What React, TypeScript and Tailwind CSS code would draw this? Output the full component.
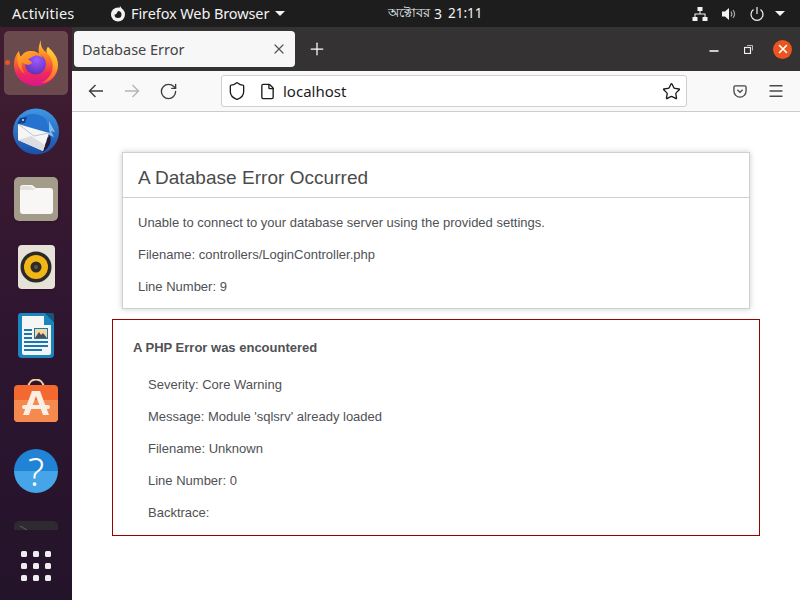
import { Minus, Plus, RotateCw, X, Menu, Star, Shield, File } from 'lucide-react'

function FirefoxIcon() {
  return (
    <svg width="48" height="48" viewBox="0 0 48 48">
      <defs>
        <linearGradient id="ffOuter" x1="0.5" y1="0" x2="0.5" y2="1">
          <stop offset="0" stopColor="#ffcf3a" />
          <stop offset="0.4" stopColor="#ff7a1f" />
          <stop offset="0.72" stopColor="#f0295c" />
          <stop offset="1" stopColor="#d9158f" />
        </linearGradient>
        <linearGradient id="ffFlame" x1="0.5" y1="0" x2="0.5" y2="1">
          <stop offset="0" stopColor="#ffe14a" />
          <stop offset="0.6" stopColor="#ffa52b" />
          <stop offset="1" stopColor="#ff5a2b" />
        </linearGradient>
        <linearGradient id="ffHead" x1="0" y1="0" x2="0.6" y2="1">
          <stop offset="0" stopColor="#ffb02e" />
          <stop offset="1" stopColor="#ff6a1f" />
        </linearGradient>
        <radialGradient id="ffGlobe" cx="0.55" cy="0.3" r="0.8">
          <stop offset="0" stopColor="#9a5cff" />
          <stop offset="1" stopColor="#5a2ab0" />
        </radialGradient>
      </defs>
      <path d="M29 1c-1 6 1 9 6 13-1-3 0-5 1-6 5 5 10 10 10 18 0 12-10 21-22 21C12 47 2 38 2 26c0-6 2-11 5-14 0 3 1 5 2 6 2-4 6-6 10-6 3 0 6 1 8 3-1-4 0-10 2-14z" fill="url(#ffOuter)" />
      <path d="M29 1c-1 6 1 9 6 13 5 5 7 12 5 18-2 6-6 10-11 12 9 0 17-8 17-18 0-8-5-13-10-18-1 1-2 3-1 6-4-3-7-7-6-13z" fill="url(#ffFlame)" />
      <circle cx="23.500" cy="25" r="10.500" fill="url(#ffGlobe)" />
      <path d="M7 12c0 3 1 5 2 6 2-4 6-6 10-6 5 0 10 3 12 7-3-2-6-3-9-2-2 1-3 2-6 3 2 2 3 2 4 4-3 3-7 2-10-1-1 3 0 8 3 12-6-4-10-12-6-23z" fill="url(#ffHead)" />
    </svg>
  )
}

function ThunderbirdIcon() {
  return (
    <svg width="48" height="48" viewBox="0 0 48 48">
      <defs>
        <linearGradient id="tbRing" x1="0.5" y1="0" x2="0.5" y2="1">
          <stop offset="0" stopColor="#3f97e4" />
          <stop offset="1" stopColor="#1a4fa8" />
        </linearGradient>
      </defs>
      <circle cx="24" cy="24.500" r="23" fill="url(#tbRing)" />
      <path d="M36 24c5 7 3 16-5 21l-3-4 5-1-3-3 5-2-2-4 4-1z" fill="#2a1836" />
      <path d="M37 14l6 11-4-1 3 6-5-2z" fill="#7fbdee" />
      <path d="M6 15C12 6 25 4 34 12l4 14-18-5z" fill="#2673cf" />
      <path d="M6 17l31 9-6 18L6 33z" fill="#f5f5f5" />
      <path d="M6 17l16 12 15-3" fill="none" stroke="#c0c4cb" strokeWidth="1" />
      <path d="M6 33l25 11 2-6-14-9z" fill="#dcdde0" />
      <path d="M5 17l3-6 7-1-2 6z" fill="#14428a" />
      <circle cx="11" cy="13" r="1" fill="#bfe0f7" />
    </svg>
  )
}

function FilesIcon() {
  return (
    <div className="w-[44px] h-[44px] rounded-[5px] bg-[#a39c8b] flex items-center justify-center shadow-sm">
      <svg width="33" height="29" viewBox="0 0 33 29">
        <path d="M0 3a3 3 0 0 1 3-3h9l4 3h14a3 3 0 0 1 3 3v20a3 3 0 0 1-3 3H3a3 3 0 0 1-3-3z" fill="#f9f7f6" />
        <path d="M0 5h13l3-2H12L11 1H2L0 3z" fill="#e4e0da" />
      </svg>
    </div>
  )
}

function RhythmboxIcon() {
  return (
    <div className="w-[37px] h-[44px] rounded-[4px] bg-[#e6e2d8] flex items-center justify-center shadow-sm">
      <svg width="32" height="32" viewBox="0 0 32 32">
        <circle cx="16" cy="16" r="15.500" fill="#2b2a28" />
        <circle cx="16" cy="16" r="12" fill="#f2b616" />
        <circle cx="16" cy="16" r="5.500" fill="#2e2c26" />
        <circle cx="16" cy="16" r="2" fill="#57544c" />
      </svg>
    </div>
  )
}

function WriterIcon() {
  return (
    <svg width="36" height="45" viewBox="0 0 36 45">
      <path d="M3 0h24l9 9v32a4 4 0 0 1-4 4H4a4 4 0 0 1-4-4V3a3 3 0 0 1 3-3z" fill="#1b86bd" />
      <path d="M4 3h22v9h7v28a2 2 0 0 1-2 2H6a2 2 0 0 1-2-2z" fill="#f4f5f5" />
      <path d="M27 0l9 9V2a2 2 0 0 0-2-2z" fill="#14587f" />
      <rect x="6" y="16" width="8" height="2" fill="#1b77ad" />
      <rect x="6" y="20" width="8" height="2" fill="#1b77ad" />
      <rect x="6" y="24" width="8" height="2" fill="#1b77ad" />
      <rect x="6" y="28" width="24" height="2" fill="#1b77ad" />
      <rect x="6" y="32" width="24" height="2" fill="#1b77ad" />
      <rect x="6" y="36" width="18" height="2" fill="#1b77ad" />
      <rect x="16.500" y="15.500" width="13" height="10" fill="#f3d9a0" stroke="#1b77ad" />
      <path d="M17 25l4-6 2 3 2-2 4 5z" fill="#4a4f57" />
    </svg>
  )
}

function AppCenterIcon() {
  return (
    <svg width="44" height="44" viewBox="0 0 44 44" className="mb-[4px]">
      <path d="M14.500 8c0-10 15-10 15 0" fill="none" stroke="#f3cf9d" strokeWidth="2" />
      <rect x="0" y="6" width="44" height="37" rx="4" fill="#f4692f" />
      <path d="M0 21h44v18a4 4 0 0 1-4 4H4a4 4 0 0 1-4-4z" fill="#f58a4e" />
      <path d="M18 12h8l9 24h-6l-7-19-7 19H9z" fill="#fbeee5" />
      <rect x="8" y="26" width="28" height="4" rx="2" fill="#fbeee5" />
    </svg>
  )
}

function HelpIcon() {
  return (
    <div className="w-[44px] h-[44px] rounded-full bg-[linear-gradient(#2183d6_0%,#2183d6_50%,#46a5e8_50%,#46a5e8_100%)] flex items-center justify-center text-white text-[38px] font-light leading-none font-['Noto_Sans',sans-serif]">
      ?
    </div>
  )
}

function DockItem({ children, active }: { children: React.ReactNode; active?: boolean }) {
  return (
    <div className={`relative w-[64px] h-[64px] shrink-0 rounded-[5px] flex items-center justify-center ${active ? 'bg-[#6b4a4e]' : ''}`}>
      {children}
    </div>
  )
}

function Dock() {
  return (
    <aside className="w-[72px] shrink-0 flex flex-col items-center pt-[4px] gap-[4px] bg-[linear-gradient(#421d31,#2d1530_55%,#24142a)] overflow-hidden">
      <DockItem active>
        <span className="absolute left-[1px] top-[29px] w-[5px] h-[5px] rounded-full bg-[#e95420]" />
        <FirefoxIcon />
      </DockItem>
      <DockItem><ThunderbirdIcon /></DockItem>
      <DockItem><FilesIcon /></DockItem>
      <DockItem><RhythmboxIcon /></DockItem>
      <DockItem><WriterIcon /></DockItem>
      <DockItem><AppCenterIcon /></DockItem>
      <DockItem><HelpIcon /></DockItem>
      {/* terminal icon, cut off by the app grid button */}
      <svg width="44" height="9" viewBox="0 0 44 9" className="mt-[14px] shrink-0">
        <path d="M0 9V5a5 5 0 0 1 5-5h34a5 5 0 0 1 5 5v4z" fill="#2f2a30" />
        <path d="M6 5l7 4" stroke="#5a555b" strokeWidth="1.200" />
      </svg>
      <div className="grid grid-cols-3 gap-[6px] pt-[17px]">
        {Array.from({ length: 9 }).map((_, i) => (
          <span key={i} className="w-[6px] h-[6px] rounded-[1.500px] bg-[#eeeeee]" />
        ))}
      </div>
    </aside>
  )
}

function TopBar() {
  return (
    <header className="h-[27px] shrink-0 bg-[#1d1d1d] flex items-center text-[#f2f2f2] text-[14.500px] font-['Noto_Sans',sans-serif]">
      <div className="w-[388px] shrink-0 flex items-center">
        <span className="ml-[12px] w-[98px] tracking-[0.2px]">Activities</span>
        <svg width="16" height="16" viewBox="0 0 16 16" className="mr-[5px]">
          <circle cx="8" cy="8.500" r="7" fill="#f2f2f2" />
          <path d="M8 5a3.500 3.500 0 1 1-3.500 3.500C6 9 7 7 8 5z" fill="#1d1d1d" />
          <path d="M10 0l2 3-3 1z" fill="#f2f2f2" />
        </svg>
        <span className="tracking-[-0.1px]">Firefox Web Browser</span>
        <span className="ml-[6px] w-0 h-0 border-x-[5px] border-x-transparent border-t-[5px] border-t-[#f2f2f2]" />
      </div>
      <span className="text-[12.500px] text-[#e8f0f5]">অক্টোবর</span>
      <span className="ml-[4px] text-[14px]">3</span>
      <span className="ml-[6px] text-[13.500px]">21:11</span>
      <div className="ml-auto mr-[15px] flex items-center">
        <svg width="16" height="16" viewBox="0 0 16 16" fill="#f2f2f2">
          <rect x="5.500" y="1" width="5" height="4" />
          <rect x="0.500" y="11" width="5" height="4" />
          <rect x="10.500" y="11" width="5" height="4" />
          <path d="M7.500 5h1v2.500H13.500V11h-1V8.500h-9V11h-1V7.500h5z" />
        </svg>
        <svg width="16" height="16" viewBox="0 0 16 16" fill="none" className="ml-[13px]">
          <path d="M1 5.500h3l4-3.500v12l-4-3.500H1z" fill="#f2f2f2" />
          <path d="M10 5.500c1 1.500 1 3.500 0 5M12 4c2 2.500 2 5.500 0 8" stroke="#a8a8a8" strokeWidth="1.200" />
        </svg>
        <svg width="16" height="16" viewBox="0 0 16 16" fill="none" stroke="#f2f2f2" strokeWidth="1.200" className="ml-[12px]">
          <path d="M8 1v7" />
          <path d="M4.500 3.500a6 6 0 1 0 7 0" />
        </svg>
        <span className="ml-[10px] w-0 h-0 border-x-[5px] border-x-transparent border-t-[5px] border-t-[#f2f2f2]" />
      </div>
    </header>
  )
}

function TabBar() {
  return (
    <div className="h-[44px] shrink-0 bg-[#343233] flex items-center text-white">
      <div className="ml-[2px] w-[221px] h-[36px] rounded-[4px] bg-[#f7f7f7] flex items-center pl-[8px] pr-[8px] text-[#444444] text-[14.500px] font-['Noto_Sans',sans-serif]">
        <span className="pt-[2px]">Database Error</span>
        <X size={16} strokeWidth={1.800} className="ml-auto text-[#555555]" />
      </div>
      <Plus size={20} strokeWidth={1.500} className="ml-[12px]" />
      <div className="ml-auto flex items-center">
        <Minus size={14} strokeWidth={2.200} className="mr-[23px] mt-[4px]" />
        <svg width="9" height="9" viewBox="0 0 9 9" fill="none" stroke="#f2f2f2" className="mr-[20px]">
          <rect x="0.500" y="2.500" width="6" height="6" strokeWidth="1.200" />
          <path d="M3 0.500h5.500v5" strokeWidth="0.700" />
        </svg>
        <div className="w-[19px] h-[19px] rounded-full bg-[#e95420] flex items-center justify-center mr-[8px]">
          <X size={14} strokeWidth={2.600} />
        </div>
      </div>
    </div>
  )
}

function Toolbar() {
  return (
    <div className="h-[41px] shrink-0 bg-[#f9f9fa] border-b border-[#cccccc] flex items-center text-[#3d3d3d]">
      <svg width="16" height="16" viewBox="0 0 16 16" fill="none" stroke="currentColor" strokeWidth="1.400" className="ml-[16px]">
        <path d="M15 8H1.500M7.500 2L1.500 8l6 6" />
      </svg>
      <svg width="16" height="16" viewBox="0 0 16 16" fill="none" stroke="#b5b5b5" strokeWidth="1.400" className="ml-[20px]">
        <path d="M1 8h13.500M8.500 2l6 6-6 6" />
      </svg>
      <RotateCw size={19} strokeWidth={1.700} className="ml-[19px]" />
      <div className="ml-[43px] w-[466px] h-[32px] rounded-[3px] bg-white border border-[#cfcfcf] flex items-center text-[#1c1c1c] font-['Noto_Sans',sans-serif] text-[15px]">
        <Shield size={20} strokeWidth={1.600} className="ml-[5px]" />
        <File size={17} strokeWidth={1.900} className="ml-[12px]" />
        <span className="ml-[7px]">localhost</span>
        <Star size={19} strokeWidth={1.700} className="ml-auto mr-[5px]" />
      </div>
      <svg width="14" height="13" viewBox="0 0 16 15" fill="none" stroke="#444444" strokeWidth="1.500" className="ml-[46px]">
        <path d="M2.500 1h11A1.500 1.500 0 0 1 15 2.500V7a7 7 0 0 1-14 0V2.500A1.500 1.500 0 0 1 2.500 1z" />
        <path d="M5 5.500l3 3 3-3" />
      </svg>
      <Menu size={18} strokeWidth={1.700} className="ml-[20px] text-[#4a4a4a]" />
    </div>
  )
}

function ErrorPage() {
  return (
    <main className="flex-1 bg-white pt-[40px] text-[#4f5155] font-['Liberation_Sans',sans-serif] text-[13px] leading-[18px]">
      <section className="mx-[50px] h-[157px] border border-[#d0d0d0] shadow-[0_0_6px_rgba(0,0,0,0.2)]">
        <h1 className="h-[45px] border-b border-[#d0d0d0] px-[15px] pt-[6px] flex items-center text-[19px] tracking-[0.04px] text-[#4b4b4b]">
          A Database Error Occurred
        </h1>
        <div className="px-[15px] pt-[16px] flex flex-col gap-[14px]">
          <p>Unable to connect to your database server using the provided settings.</p>
          <p>Filename: controllers/LoginController.php</p>
          <p>Line Number: 9</p>
        </div>
      </section>
      <section className="mx-[40px] mt-[10px] h-[217px] border border-[#990000] pl-[20px] pt-[19px]">
        <h4 className="font-bold">A PHP Error was encountered</h4>
        <div className="ml-[15px] mt-[19px] flex flex-col gap-[14px]">
          <p>Severity: Core Warning</p>
          <p>Message: Module 'sqlsrv' already loaded</p>
          <p>Filename: Unknown</p>
          <p>Line Number: 0</p>
          <p>Backtrace:</p>
        </div>
      </section>
    </main>
  )
}

export default function App() {
  return (
    <div className="w-[800px] h-[600px] flex flex-col overflow-hidden">
      <TopBar />
      <div className="flex-1 flex min-h-0">
        <Dock />
        <div className="flex-1 flex flex-col min-w-0">
          <TabBar />
          <Toolbar />
          <ErrorPage />
        </div>
      </div>
    </div>
  )
}
